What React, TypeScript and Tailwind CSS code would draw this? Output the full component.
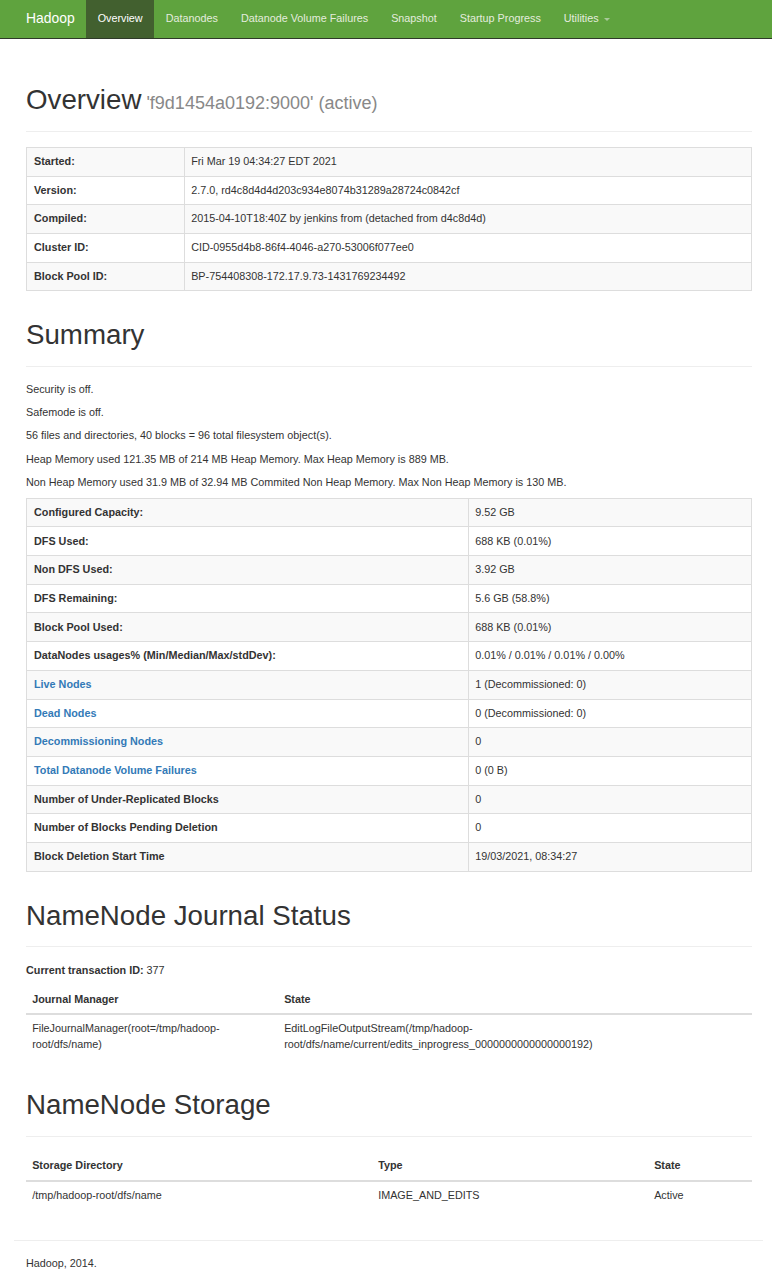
import React from "react";

const font = { fontFamily: '"Liberation Sans", Arial, Helvetica, sans-serif' };

const navItems = [
  "Datanodes",
  "Datanode Volume Failures",
  "Snapshot",
  "Startup Progress",
];

const overviewRows: [string, string][] = [
  ["Started:", "Fri Mar 19 04:34:27 EDT 2021"],
  ["Version:", "2.7.0, rd4c8d4d4d203c934e8074b31289a28724c0842cf"],
  ["Compiled:", "2015-04-10T18:40Z by jenkins from (detached from d4c8d4d)"],
  ["Cluster ID:", "CID-0955d4b8-86f4-4046-a270-53006f077ee0"],
  ["Block Pool ID:", "BP-754408308-172.17.9.73-1431769234492"],
];

const summaryRows: { label: string; value: string; link?: boolean }[] = [
  { label: "Configured Capacity:", value: "9.52 GB" },
  { label: "DFS Used:", value: "688 KB (0.01%)" },
  { label: "Non DFS Used:", value: "3.92 GB" },
  { label: "DFS Remaining:", value: "5.6 GB (58.8%)" },
  { label: "Block Pool Used:", value: "688 KB (0.01%)" },
  { label: "DataNodes usages% (Min/Median/Max/stdDev):", value: "0.01% / 0.01% / 0.01% / 0.00%" },
  { label: "Live Nodes", value: "1 (Decommissioned: 0)", link: true },
  { label: "Dead Nodes", value: "0 (Decommissioned: 0)", link: true },
  { label: "Decommissioning Nodes", value: "0", link: true },
  { label: "Total Datanode Volume Failures", value: "0 (0 B)", link: true },
  { label: "Number of Under-Replicated Blocks", value: "0" },
  { label: "Number of Blocks Pending Deletion", value: "0" },
  { label: "Block Deletion Start Time", value: "19/03/2021, 08:34:27" },
];

function PageHeader({ title, sub, first }: { title: string; sub?: string; first?: boolean }) {
  return (
    <div
      className={`${first ? "mt-[46px]" : "mt-[29px]"} mb-[15.4px] pb-[15px] border-b border-[#eeeeee]`}
    >
      <h1 className="text-[27.7px] leading-[30.5px] text-[#333333]">
        {title}
        {sub && <span className="text-[18px] leading-none text-[#888888]"> {sub}</span>}
      </h1>
    </div>
  );
}

function KeyValueTable({
  rows,
  keyWidth,
}: {
  rows: { label: string; value: string; link?: boolean }[];
  keyWidth: string;
}) {
  return (
    <table className="w-full border-collapse border border-[#dddddd] mb-[15.4px]">
      <tbody>
        {rows.map((r, i) => (
          <tr key={r.label} className={i % 2 === 0 ? "bg-[#f9f9f9]" : "bg-white"}>
            <th
              className={`${keyWidth} border border-[#dddddd] px-[7px] py-[6.15px] text-left align-top font-bold ${
                r.link ? "text-[#337ab7]" : "text-[#333333]"
              }`}
            >
              {r.label}
            </th>
            <td className="border border-[#dddddd] px-[6.15px] py-[6.15px] align-top">{r.value}</td>
          </tr>
        ))}
      </tbody>
    </table>
  );
}

export default function App() {
  return (
    <div style={font} className="min-h-screen bg-white text-[10.8px] leading-[15.4px] text-[#333333]">
      {/* Navbar */}
      <nav className="h-[39px] bg-[#5fa33e] border-b border-[#2f3a2a]">
        <div className="flex h-[38px] items-stretch px-[26px]">
          <span className="flex items-center pr-[11.5px] text-[13.9px] text-white">Hadoop</span>
          <span className="flex items-center bg-[#42602f] px-[11.5px] text-white">Overview</span>
          {navItems.map((n) => (
            <span key={n} className="flex items-center px-[11.5px] text-[#e4ecdf]">
              {n}
            </span>
          ))}
          <span className="flex items-center gap-[5px] px-[11.5px] text-[#e4ecdf]">
            Utilities
            <span className="mt-[1px] h-0 w-0 border-x-[3px] border-t-[3px] border-x-transparent border-t-[#a9c99a]" />
          </span>
        </div>
      </nav>

      <div className="pl-[26px] pr-[20px]">
        {/* Overview */}
        <PageHeader title="Overview" sub="'f9d1454a0192:9000' (active)" first />
        <KeyValueTable
          rows={overviewRows.map(([label, value]) => ({ label, value }))}
          keyWidth="w-[158px]"
        />

        {/* Summary */}
        <PageHeader title="Summary" />
        <div className="flex flex-col gap-[7.7px] mb-[7.7px]">
          <p>Security is off.</p>
          <p>Safemode is off.</p>
          <p>56 files and directories, 40 blocks = 96 total filesystem object(s).</p>
          <p>Heap Memory used 121.35 MB of 214 MB Heap Memory. Max Heap Memory is 889 MB.</p>
          <p>
            Non Heap Memory used 31.9 MB of 32.94 MB Commited Non Heap Memory. Max Non Heap Memory is 130 MB.
          </p>
        </div>
        <KeyValueTable rows={summaryRows} keyWidth="w-[442px]" />

        {/* Journal */}
        <PageHeader title="NameNode Journal Status" />
        <p className="mb-[7.7px]">
          <b>Current transaction ID:</b> 377
        </p>
        <table className="w-full border-collapse mb-[32px]">
          <thead>
            <tr>
              <th className="w-[252px] border-b-2 border-[#dddddd] px-[6.15px] py-[6.15px] text-left font-bold">
                Journal Manager
              </th>
              <th className="border-b-2 border-[#dddddd] px-[6.15px] py-[6.15px] text-left font-bold">State</th>
            </tr>
          </thead>
          <tbody>
            <tr>
              <td className="px-[6.15px] py-[6.15px] align-top">
                FileJournalManager(root=/tmp/hadoop-
                <br />
                root/dfs/name)
              </td>
              <td className="px-[6.15px] py-[6.15px] align-top">
                EditLogFileOutputStream(/tmp/hadoop-
                <br />
                root/dfs/name/current/edits_inprogress_0000000000000000192)
              </td>
            </tr>
          </tbody>
        </table>

        {/* Storage */}
        <PageHeader title="NameNode Storage" />
        <table className="w-full border-collapse mb-[15.4px]">
          <thead>
            <tr>
              <th className="w-[346px] border-b-2 border-[#dddddd] px-[6.15px] py-[6.15px] text-left font-bold">
                Storage Directory
              </th>
              <th className="w-[276px] border-b-2 border-[#dddddd] px-[6.15px] py-[6.15px] text-left font-bold">
                Type
              </th>
              <th className="border-b-2 border-[#dddddd] px-[6.15px] py-[6.15px] text-left font-bold">State</th>
            </tr>
          </thead>
          <tbody>
            <tr>
              <td className="px-[6.15px] py-[6.15px]">/tmp/hadoop-root/dfs/name</td>
              <td className="px-[6.15px] py-[6.15px]">IMAGE_AND_EDITS</td>
              <td className="px-[6.15px] py-[6.15px]">Active</td>
            </tr>
          </tbody>
        </table>
      </div>

      {/* Footer */}
      <div className="pl-[14px] pr-[9px]">
        <hr className="mt-[30px] mb-[15.4px] border-t border-[#eeeeee]" />
      </div>
      <div className="px-[26px] pb-[8px]">
        <p>Hadoop, 2014.</p>
      </div>
    </div>
  );
}
